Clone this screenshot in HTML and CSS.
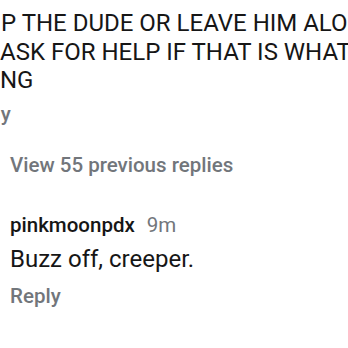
FILE: index.html
```html
<!DOCTYPE html>
<html>
<head>
<meta charset="utf-8">
<link rel="stylesheet" href="styles.css">
</head>
<body>
<div class="page">
  <div class="parent">
    <div class="parent-text">
      <div class="line">P THE DUDE OR LEAVE HIM ALONE.</div>
      <div class="line line-b">ASK FOR HELP IF THAT IS WHAT THEY</div>
      <div class="line line-b">NG</div>
    </div>
    <div class="parent-reply"><span class="clip-reply">Reply</span></div>
  </div>
  <div class="thread">
    <div class="view-more">View 55 previous replies</div>
    <div class="comment">
      <div class="meta"><span class="user">pinkmoonpdx</span><span class="time">9m</span></div>
      <div class="body">Buzz off, creeper.</div>
      <div class="reply">Reply</div>
    </div>
  </div>
</div>
</body>
</html>
```

FILE: styles.css
```css
html, body {
  margin: 0;
  padding: 0;
  background: #ffffff;
  overflow: hidden;
}
.page {
  width: 348px;
  height: 348px;
  overflow: hidden;
  font-family: Roboto, "Noto Sans", sans-serif;
  color: #161616;
}
.parent {
  display: flex;
  flex-direction: column;
}
.parent-text {
  padding-top: 9px;
}
.line {
  font-size: 24px;
  line-height: 28.5px;
  white-space: nowrap;
  padding-left: 1px;
}
.line-b {
  padding-left: 0;
}
.parent-reply {
  margin-top: 7px;
  font-size: 20.5px;
  line-height: 24px;
  font-weight: 500;
  color: #72767b;
  white-space: nowrap;
  overflow: hidden;
}
.clip-reply {
  display: inline-block;
  margin-left: -40px;
}
.thread {
  padding-left: 10px;
  display: flex;
  flex-direction: column;
}
.view-more {
  margin-top: 27px;
  font-size: 20.5px;
  line-height: 24px;
  font-weight: 500;
  color: #72767b;
}
.comment {
  margin-top: 36px;
  display: flex;
  flex-direction: column;
}
.meta {
  display: flex;
  gap: 12px;
  font-size: 20.5px;
  line-height: 24px;
  white-space: nowrap;
}
.user {
  font-weight: 500;
  color: #161616;
}
.time {
  color: #72767b;
}
.body {
  margin-top: 8.5px;
  font-size: 24px;
  line-height: 28px;
}
.reply {
  margin-top: 11px;
  font-size: 20.5px;
  line-height: 24px;
  font-weight: 500;
  color: #72767b;
}
```
